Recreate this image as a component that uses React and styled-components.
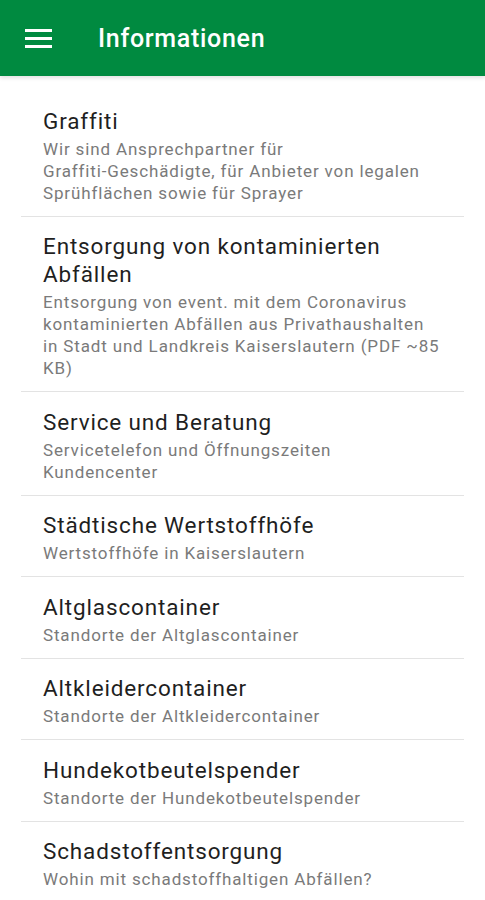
import React from "react";
import styled, { createGlobalStyle } from "styled-components";

const Global = createGlobalStyle`
  html, body { margin: 0; padding: 0; background: #fff; }
  body { font-family: Roboto, "Noto Sans", Arial, sans-serif; -webkit-font-smoothing: antialiased; }
`;

const Page = styled.div`
  width: 485px;
  min-height: 900px;
  background: #fff;
`;

const AppBar = styled.header`
  height: 76px;
  background: #008a40;
  display: flex;
  align-items: center;
  padding-left: 25px;
  box-sizing: border-box;
  box-shadow: 0 2px 4px rgba(0, 0, 0, 0.12);
`;

const MenuButton = styled.div`
  width: 27px;
  height: 19px;
  display: flex;
  flex-direction: column;
  justify-content: space-between;
  margin-right: 46px;
  span {
    display: block;
    height: 3px;
    background: #fff;
  }
`;

const Title = styled.h1`
  margin: 0;
  color: #fff;
  font-size: 25px;
  font-weight: 500;
  letter-spacing: 0.7px;
`;

const List = styled.ul`
  list-style: none;
  margin: 0;
  padding: 15px 0 0;
`;

const Item = styled.li`
  margin: 0 21px;
  padding: 15.5px 16px 12px 22px;
  border-bottom: ${(p) => (p.$last ? "none" : "1px solid #e3e3e3")};
`;

const ItemTitle = styled.div`
  font-size: 22.5px;
  line-height: 28px;
  letter-spacing: 0.85px;
  color: #1f1f1f;
  margin-bottom: 3px;
`;

const ItemSub = styled.div`
  font-size: 17px;
  line-height: 22px;
  letter-spacing: 0.85px;
  color: #7a7a7a;
`;

const items = [
  {
    title: "Graffiti",
    sub: "Wir sind Ansprechpartner für\nGraffiti-Geschädigte, für Anbieter von legalen\nSprühflächen sowie für Sprayer",
  },
  {
    title: "Entsorgung von kontaminierten\nAbfällen",
    sub: "Entsorgung von event. mit dem Coronavirus\nkontaminierten Abfällen aus Privathaushalten\nin Stadt und Landkreis Kaiserslautern (PDF ~85\nKB)",
  },
  { title: "Service und Beratung", sub: "Servicetelefon und Öffnungszeiten\nKundencenter" },
  { title: "Städtische Wertstoffhöfe", sub: "Wertstoffhöfe in Kaiserslautern" },
  { title: "Altglascontainer", sub: "Standorte der Altglascontainer" },
  { title: "Altkleidercontainer", sub: "Standorte der Altkleidercontainer" },
  { title: "Hundekotbeutelspender", sub: "Standorte der Hundekotbeutelspender" },
  { title: "Schadstoffentsorgung", sub: "Wohin mit schadstoffhaltigen Abfällen?" },
];

const Lines = ({ text }) =>
  text.split("\n").map((line, j) => (
    <React.Fragment key={j}>
      {j > 0 && <br />}
      {line}
    </React.Fragment>
  ));

export default function App() {
  return (
    <Page>
      <Global />
      <AppBar>
        <MenuButton>
          <span />
          <span />
          <span />
        </MenuButton>
        <Title>Informationen</Title>
      </AppBar>
      <List>
        {items.map((it, i) => (
          <Item key={it.title} $last={i === items.length - 1}>
            <ItemTitle>
              <Lines text={it.title} />
            </ItemTitle>
            <ItemSub>
              <Lines text={it.sub} />
            </ItemSub>
          </Item>
        ))}
      </List>
    </Page>
  );
}
